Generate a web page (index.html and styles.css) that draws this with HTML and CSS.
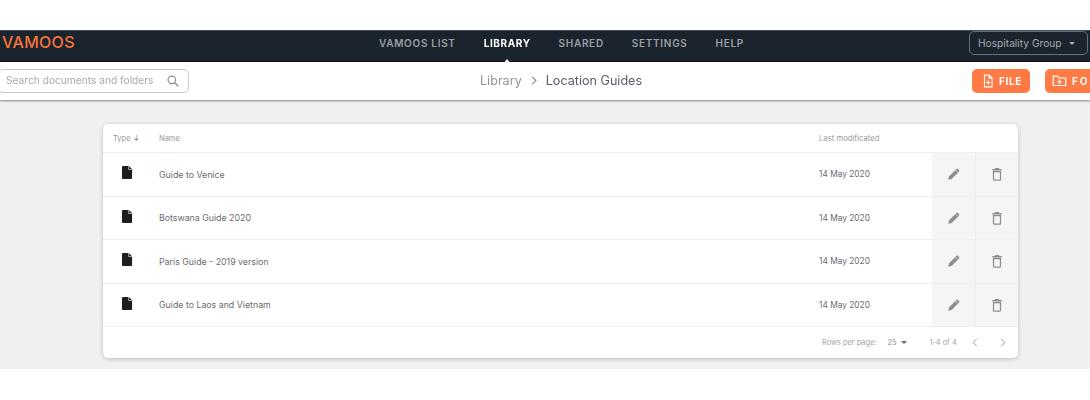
FILE: index.html
```html
<!DOCTYPE html>
<html lang="en">
<head>
<meta charset="utf-8">
<title>Vamoos Library</title>
<link rel="stylesheet" href="styles.css">
</head>
<body>
<div class="app">
  <header class="nav">
    <div class="logo">VAMOOS</div>
    <nav class="links">
      <a class="link">VAMOOS LIST</a>
      <a class="link active">LIBRARY</a>
      <a class="link">SHARED</a>
      <a class="link">SETTINGS</a>
      <a class="link">HELP</a>
    </nav>
    <div class="group"><span>Hospitality Group</span><i class="caret"></i></div>
  </header>
  <section class="toolbar">
    <div class="search">
      <span class="placeholder">Search documents and folders</span>
      <svg class="search-icon" viewBox="0 0 24 24" width="14" height="14"><circle cx="10" cy="10" r="6.5" fill="none" stroke="#8a8a8a" stroke-width="2"/><path d="M15 15l6 6" stroke="#8a8a8a" stroke-width="2" fill="none"/></svg>
    </div>
    <div class="crumbs"><span class="crumb-a">Library</span><svg class="crumb-sep" viewBox="0 0 8 12" width="6" height="9"><path d="M1.500 1l5 5-5 5" fill="none" stroke="#777" stroke-width="1.400"/></svg><span class="crumb-b">Location Guides</span></div>
    <div class="actions">
      <button class="btn btn-file">
        <svg viewBox="0 0 24 24" width="14" height="14"><path d="M6 2h8l5 5v15H6z M14 2v5h5 M12.500 10.500v8 M8.500 14.500h8" fill="none" stroke="#fff" stroke-width="1.900"/></svg>FILE
      </button>
      <button class="btn btn-folder">
        <svg viewBox="0 0 24 24" width="15" height="15"><path d="M2 5h7l2 3h11v12H2z M12 10.500v7 M8.500 14h7" fill="none" stroke="#fff" stroke-width="1.900"/></svg>FOLDER
      </button>
    </div>
  </section>
  <main class="content">
    <div class="card">
      <div class="row head">
        <div class="c-type">Type <span class="sort">↓</span></div>
        <div class="c-name">Name</div>
        <div class="c-date">Last modificated</div>
      </div>
      <div class="row item">
        <div class="c-type"><svg class="doc" viewBox="0 0 12 14" width="11" height="13"><path d="M1 0h6.500L11 3.500V13a1 1 0 0 1-1 1H1a1 1 0 0 1-1-1V1a1 1 0 0 1 1-1z" fill="#1e1e1e"/><path d="M7.300 0v3.700H11" fill="none" stroke="#fff" stroke-width=".7"/></svg></div>
        <div class="c-name">Guide to Venice</div>
        <div class="c-date">14 May 2020</div>
        <div class="c-act"><svg viewBox="0 0 24 24" width="14" height="14"><path d="M2 22l1.500-6L16 3.500a2 2 0 0 1 3 0l1.500 1.500a2 2 0 0 1 0 3L8 20.500z" fill="#8f8f8f"/><path d="M14.500 5l4.500 4.500" stroke="#f5f5f5" stroke-width="1.200"/></svg></div>
        <div class="c-act"><svg viewBox="0 0 24 24" width="14" height="14"><path d="M9 1.500h6l1 2h4v2.500H4V3.500h4z" fill="#8f8f8f"/><path d="M6 8h12v13a1.500 1.500 0 0 1-1.500 1.500h-9A1.500 1.500 0 0 1 6 21z" fill="none" stroke="#8f8f8f" stroke-width="2.200"/></svg></div>
      </div>
      <div class="row item">
        <div class="c-type"><svg class="doc" viewBox="0 0 12 14" width="11" height="13"><path d="M1 0h6.500L11 3.500V13a1 1 0 0 1-1 1H1a1 1 0 0 1-1-1V1a1 1 0 0 1 1-1z" fill="#1e1e1e"/><path d="M7.300 0v3.700H11" fill="none" stroke="#fff" stroke-width=".7"/></svg></div>
        <div class="c-name">Botswana Guide 2020</div>
        <div class="c-date">14 May 2020</div>
        <div class="c-act"><svg viewBox="0 0 24 24" width="14" height="14"><path d="M2 22l1.500-6L16 3.500a2 2 0 0 1 3 0l1.500 1.500a2 2 0 0 1 0 3L8 20.500z" fill="#8f8f8f"/><path d="M14.500 5l4.500 4.500" stroke="#f5f5f5" stroke-width="1.200"/></svg></div>
        <div class="c-act"><svg viewBox="0 0 24 24" width="14" height="14"><path d="M9 1.500h6l1 2h4v2.500H4V3.500h4z" fill="#8f8f8f"/><path d="M6 8h12v13a1.500 1.500 0 0 1-1.500 1.500h-9A1.500 1.500 0 0 1 6 21z" fill="none" stroke="#8f8f8f" stroke-width="2.200"/></svg></div>
      </div>
      <div class="row item">
        <div class="c-type"><svg class="doc" viewBox="0 0 12 14" width="11" height="13"><path d="M1 0h6.500L11 3.500V13a1 1 0 0 1-1 1H1a1 1 0 0 1-1-1V1a1 1 0 0 1 1-1z" fill="#1e1e1e"/><path d="M7.300 0v3.700H11" fill="none" stroke="#fff" stroke-width=".7"/></svg></div>
        <div class="c-name">Paris Guide - 2019 version</div>
        <div class="c-date">14 May 2020</div>
        <div class="c-act"><svg viewBox="0 0 24 24" width="14" height="14"><path d="M2 22l1.500-6L16 3.500a2 2 0 0 1 3 0l1.500 1.500a2 2 0 0 1 0 3L8 20.500z" fill="#8f8f8f"/><path d="M14.500 5l4.500 4.500" stroke="#f5f5f5" stroke-width="1.200"/></svg></div>
        <div class="c-act"><svg viewBox="0 0 24 24" width="14" height="14"><path d="M9 1.500h6l1 2h4v2.500H4V3.500h4z" fill="#8f8f8f"/><path d="M6 8h12v13a1.500 1.500 0 0 1-1.500 1.500h-9A1.500 1.500 0 0 1 6 21z" fill="none" stroke="#8f8f8f" stroke-width="2.200"/></svg></div>
      </div>
      <div class="row item">
        <div class="c-type"><svg class="doc" viewBox="0 0 12 14" width="11" height="13"><path d="M1 0h6.500L11 3.500V13a1 1 0 0 1-1 1H1a1 1 0 0 1-1-1V1a1 1 0 0 1 1-1z" fill="#1e1e1e"/><path d="M7.300 0v3.700H11" fill="none" stroke="#fff" stroke-width=".7"/></svg></div>
        <div class="c-name">Guide to Laos and Vietnam</div>
        <div class="c-date">14 May 2020</div>
        <div class="c-act"><svg viewBox="0 0 24 24" width="14" height="14"><path d="M2 22l1.500-6L16 3.500a2 2 0 0 1 3 0l1.500 1.500a2 2 0 0 1 0 3L8 20.500z" fill="#8f8f8f"/><path d="M14.500 5l4.500 4.500" stroke="#f5f5f5" stroke-width="1.200"/></svg></div>
        <div class="c-act"><svg viewBox="0 0 24 24" width="14" height="14"><path d="M9 1.500h6l1 2h4v2.500H4V3.500h4z" fill="#8f8f8f"/><path d="M6 8h12v13a1.500 1.500 0 0 1-1.500 1.500h-9A1.500 1.500 0 0 1 6 21z" fill="none" stroke="#8f8f8f" stroke-width="2.200"/></svg></div>
      </div>
      <div class="pager">
        <span class="rows-label">Rows per page:</span>
        <span class="rows-val">25</span><i class="caret small"></i>
        <span class="range">1-4 of 4</span>
        <svg class="chev first" viewBox="0 0 8 12" width="6" height="9"><path d="M6.500 1l-5 5 5 5" fill="none" stroke="#999" stroke-width="1.300"/></svg>
        <svg class="chev" viewBox="0 0 8 12" width="6" height="9"><path d="M1.500 1l5 5-5 5" fill="none" stroke="#999" stroke-width="1.300"/></svg>
      </div>
    </div>
  </main>
</div>
</body>
</html>
```
FILE: styles.css
```css
* { box-sizing: border-box; }
html, body { margin: 0; padding: 0; background: #fff; overflow: hidden; height: 400px; }
body { font-family: Inter, "Open Sans", "Liberation Sans", sans-serif; }
.app { padding-top: 30px; width: 1090px; filter: blur(0.6px); }

.nav {
  height: 32px;
  background: #1b232d;
  border-top: 1px solid #444b54;
  border-bottom: 1px solid #0c0f13;
  padding-bottom: 8px;
  display: grid;
  grid-template-columns: 379px 1fr auto;
  align-items: center;
  position: relative;
}
.logo { color: #f4743b; font-size: 16px; font-weight: 500; padding-left: 2px; letter-spacing: 0.3px; margin-top: -2px; }
.links { display: flex; gap: 28px; }
.link { color: #9a9fa5; font-size: 10px; font-weight: 600; letter-spacing: 0.7px; white-space: nowrap; }
.link.active { color: #fff; font-weight: 700; position: relative; letter-spacing: 0.6px; }
.link.active::after {
  content: "";
  position: absolute;
  left: 50%;
  bottom: -15px;
  margin-left: -4px;
  border: 4px solid transparent;
  border-top: 0;
  border-bottom: 5px solid #fff;
}
.group {
  width: 119px;
  height: 24px;
  margin-right: 2px;
  border: 1px solid #667079;
  border-radius: 5px;
  color: #a5a9ae;
  font-size: 10.200px;
  display: flex;
  align-items: center;
  justify-content: space-between;
  padding: 0 12px 0 8px;
}
.caret { display: block; border: 3px solid transparent; border-top: 3.500px solid #a8acb0; border-bottom: 0; }
.caret.small { border-top-color: #666; margin-left: 5px; }

.toolbar {
  height: 38px;
  background: #fff;
  box-shadow: 0 1px 2px rgba(0,0,0,.45);
  padding-bottom: 1px;
  display: grid;
  grid-template-columns: 189px 1fr auto;
  align-items: center;
  position: relative;
}
.search {
  height: 24px;
  margin-left: -2px;
  width: 191px;
  border: 1px solid #c9c9c9;
  border-radius: 5px;
  display: flex;
  align-items: center;
  justify-content: space-between;
  padding: 0 8px 0 7px;
}
.placeholder { color: #a9a9a9; font-size: 10.200px; white-space: nowrap; margin-top: -1px; }
.crumbs { display: flex; align-items: center; padding-left: 291px; font-size: 12.600px; margin-top: -1px; }
.crumb-a { color: #94949c; }
.crumb-sep { margin: 0 9px 0 9px; }
.crumb-b { color: #5b5b68; }
.actions { display: flex; gap: 15px; width: 118px; overflow: hidden; }
.btn {
  height: 24px;
  border: 0;
  border-radius: 5px;
  background: #ff7a45;
  color: #fff;
  font: 700 10px Inter, sans-serif;
  display: flex;
  align-items: center;
  flex: none;
}
.btn-file { width: 58px; padding: 0 0 0 9px; gap: 4px; letter-spacing: 0.6px; }
.btn-folder { width: 80px; padding: 0 0 0 7px; gap: 5px; letter-spacing: 1.800px; }

.content { height: 269px; background: #f0f0f0; padding: 24px 0 0 103px; }
.card {
  width: 915px;
  height: 234px;
  background: #fff;
  border-radius: 5px;
  box-shadow: 0 1px 4px rgba(0,0,0,.22);
  overflow: hidden;
}
.row {
  display: grid;
  grid-template-columns: 56px 660px 113px 43px 43px;
  align-items: stretch;
  border-bottom: 1px solid #efefef;
}
.row > div { display: flex; align-items: center; }
.head { height: 29px; color: #9a9a9a; font-size: 7.500px; }
.head .c-date { font-size: 7.700px; }
.item { height: 43.500px; color: #6b6b72; font-size: 8.800px; }
.item .c-date { font-size: 8.350px; }
.c-type { padding-left: 10px; }
.sort { margin-left: 3px; font-size: 7px; color: #777; }
.doc { margin: -3px 0 0 9px; }
.c-act { justify-content: center; background: #f5f5f5; }
.c-act + .c-act { border-left: 1px solid #ececec; }
.pager {
  height: 31px;
  display: flex;
  align-items: center;
  font-size: 7.400px;
  color: #a3a3a3;
  padding-left: 719px;
}
.rows-val { margin-left: 11px; color: #8c8c8c; }
.range { margin-left: 22px; }
.chev.first { margin-left: 15px; }
.chev { margin-left: 22px; }
```
